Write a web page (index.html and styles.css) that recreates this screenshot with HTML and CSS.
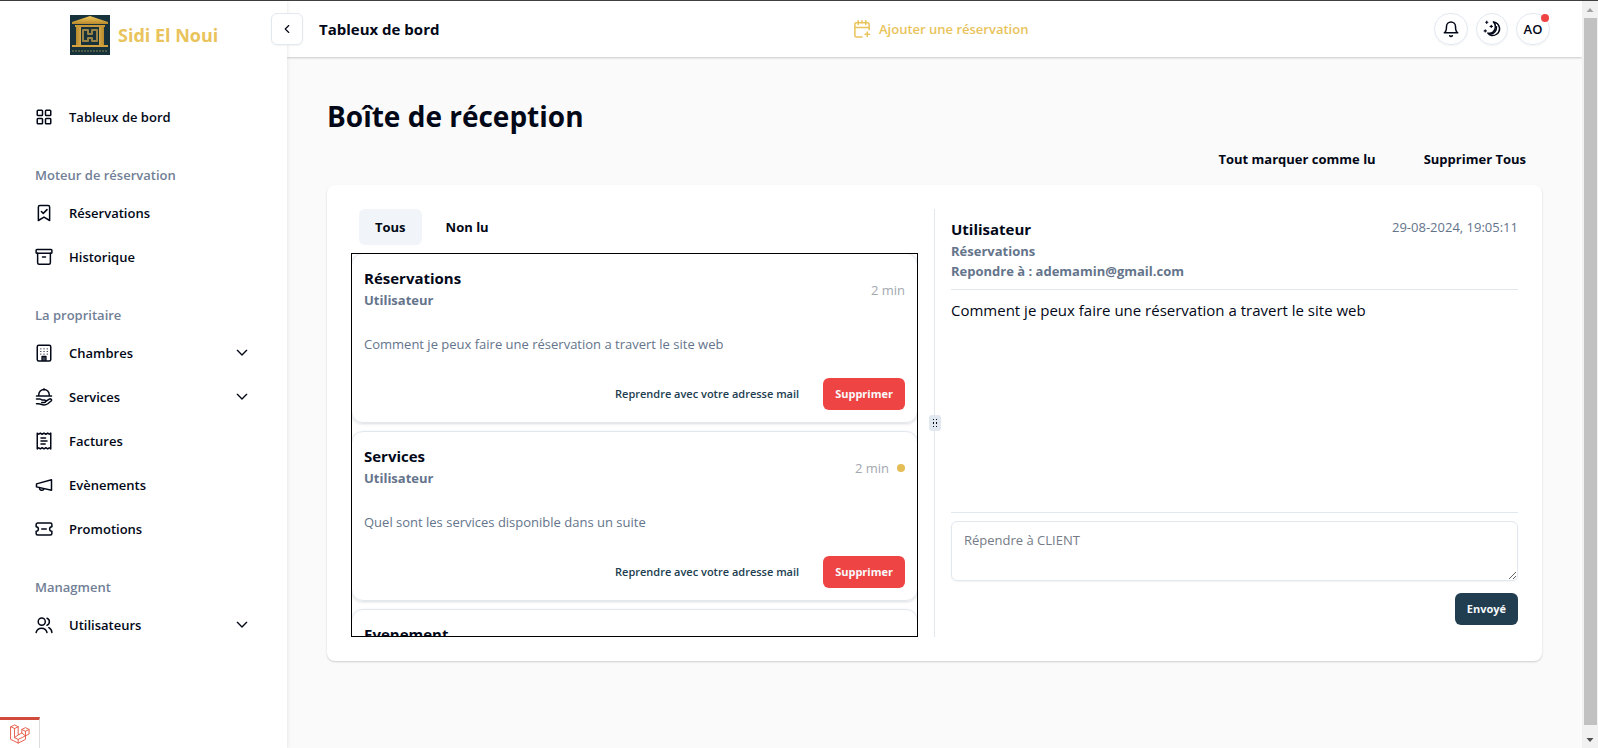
FILE: index.html
```html
<!DOCTYPE html>
<html lang="fr">
<head>
<meta charset="utf-8">
<title>Boîte de réception</title>
<link rel="stylesheet" href="styles.css">
</head>
<body>
<div class="app">
  <aside class="sidebar">
    <a class="brand" href="#">
      <svg class="brand-logo" viewBox="0 0 40 40" aria-hidden="true">
        <defs>
          <linearGradient id="gold" x1="0" y1="0" x2="0" y2="1"><stop offset="0" stop-color="#f3c95c"/><stop offset="1" stop-color="#b98a2c"/></linearGradient>
          <linearGradient id="pillar" x1="0" y1="0" x2="1" y2="0"><stop offset="0" stop-color="#b98a2c"/><stop offset=".5" stop-color="#ffdc78"/><stop offset="1" stop-color="#b98a2c"/></linearGradient>
        </defs>
        <rect width="40" height="40" fill="#17323b"/>
        <path d="M20 1 38 7v2H2V7z" fill="url(#gold)"/>
        <path d="M5 10h30v2H5z" fill="#c9983a"/>
        <path d="M6 12h5v18H6zM29 12h5v18h-5z" fill="url(#pillar)"/>
        <path d="M2 30h36v2H2z" fill="#d3a13e"/>
        <path d="M13 15h5v4h4v-4h5v11h-5v-3h-4v3h-5z" fill="none" stroke="#9a8347"/>
        <path d="M2 36h36" stroke="#4f5b45" stroke-dasharray="2 1"/>
      </svg>
      <span>Sidi El Noui</span>
    </a>
    <button class="collapse" type="button" aria-label="Réduire le menu">
      <svg class="i14" viewBox="0 0 24 24"><path d="m15 18-6-6 6-6"/></svg>
    </button>
    <nav class="nav">
      <section class="group">
        <a class="item" href="#"><svg viewBox="0 0 24 24"><rect x="3" y="3" width="7" height="7" rx="1"/><rect x="14" y="3" width="7" height="7" rx="1"/><rect x="14" y="14" width="7" height="7" rx="1"/><rect x="3" y="14" width="7" height="7" rx="1"/></svg><span>Tableux de bord</span></a>
      </section>
      <section class="group">
        <h2>Moteur de réservation</h2>
        <a class="item" href="#"><svg viewBox="0 0 24 24"><path d="M4.500 22V4a2 2 0 0 1 2-2h11a2 2 0 0 1 2 2v18L12 17.500z"/><path d="m8.500 10 2.500 2.500 5-5"/></svg><span>Réservations</span></a>
        <a class="item" href="#"><svg viewBox="0 0 24 24"><rect x="1.500" y="2" width="21" height="5" rx="1"/><path d="M3.500 7v12.500a2 2 0 0 0 2 2h13a2 2 0 0 0 2-2V7M10 12h4"/></svg><span>Historique</span></a>
      </section>
      <section class="group">
        <h2>La propritaire</h2>
        <a class="item" href="#"><svg viewBox="0 0 24 24"><rect x="3" y="1.500" width="18" height="21" rx="2"/><path d="M9.500 22v-5.500h5V22M12 17v5"/><path d="M7 6.500h1.500M11.300 6.500h1.500M15.600 6.500h1.500M7 10h1.500M11.300 10h1.500M15.600 10h1.500M7 13.500h1.500M11.300 13.500h1.500M15.600 13.500h1.500" stroke-width="1.200" stroke-linecap="butt"/></svg><span>Chambres</span><svg class="chev" viewBox="0 0 24 24"><path d="m5 8 7 7 7-7"/></svg></a>
        <a class="item" href="#"><svg viewBox="0 0 24 24"><path d="M12 2.500V1M5 9a7 7 0 0 1 14 0M2 10.500h20M2 21h3M2 14.500h4.500c1 0 2 .5 2.500 1.500h3.500a1.700 1.700 0 0 1 0 3.400H9M14 18l5-3.200c2-1 4 1 2.500 2.500L17 21c-1.500 1-3 1.500-5 1.500-3 0-5-1.500-7-1.500"/></svg><span>Services</span><svg class="chev" viewBox="0 0 24 24"><path d="m5 8 7 7 7-7"/></svg></a>
        <a class="item" href="#"><svg viewBox="0 0 24 24"><path d="M3 1.500 5 3l2-1.500L9.500 3 12 1.500 14.500 3 17 1.500 19 3l2-1.500v21L19 21l-2 1.500-2.500-1.500-2.500 1.500L9.500 21 7 22.500 5 21l-2 1.500z"/><path d="M8 8h6M8 12h8M8 16h5.500"/></svg><span>Factures</span></a>
        <a class="item" href="#"><svg viewBox="0 0 24 24"><path d="M2 10.500 22 5v14L2 14.500z"/><path d="M12 17a3 3 0 0 1-5.800-1.500"/></svg><span>Evènements</span></a>
        <a class="item" href="#"><svg viewBox="0 0 24 24"><path d="M1.500 9V6a2 2 0 0 1 2-2h17a2 2 0 0 1 2 2v3a3 3 0 0 0 0 6v3a2 2 0 0 1-2 2h-17a2 2 0 0 1-2-2v-3a3 3 0 0 0 0-6zM9 12h6"/></svg><span>Promotions</span></a>
      </section>
      <section class="group">
        <h2>Managment</h2>
        <a class="item" href="#"><svg viewBox="0 0 24 24"><path d="M16 22a7.500 7.500 0 0 0-14.500 0"/><circle cx="9" cy="7.500" r="4.700"/><path d="M16 3a5 5 0 0 1 0 9.300M18.500 15.500a8 8 0 0 1 4 6.500"/></svg><span>Utilisateurs</span><svg class="chev" viewBox="0 0 24 24"><path d="m5 8 7 7 7-7"/></svg></a>
      </section>
    </nav>
    <button class="debug" type="button" aria-label="Barre de débogage">
      <svg viewBox="0 0 22 22"><path d="m1 3 4-2 4 2v9l4-2V6l4-2 4 2v5l-4 2v4l-8 4-8-4zM1 3l4 2 4-2M5 5v10l4 2 8-4M9 12l-4 3M13 6l4 2 4-2M17 8v5M13 10l4 3M9 17v4"/></svg>
    </button>
  </aside>

  <div class="page">
    <header class="topbar">
      <strong class="crumb">Tableux de bord</strong>
      <a class="add" href="#">
        <svg viewBox="0 0 24 24"><path d="M21.500 13V5.500a2 2 0 0 0-2-2h-15a2 2 0 0 0-2 2v15a2 2 0 0 0 2 2H12M2.500 10h19M7 1v5M12 1v3M17 1v5M19 16v6M16 19h6"/></svg>
        <span>Ajouter une réservation</span>
      </a>
      <div class="tools">
        <button class="round wide" type="button" aria-label="Notifications"><svg viewBox="0 0 24 24"><path d="M6 8.500a6 6 0 0 1 12 0c0 6.500 3 8.500 3 8.500H3s3-2 3-8.500M10.300 21a2 2 0 0 0 3.400 0"/></svg></button>
        <button class="round" type="button" aria-label="Thème sombre"><svg viewBox="0 0 24 24"><path d="M14 2.500c9 2 10.500 12 4 16.500-4 3-9.500 2-11.500-1.500 5 1 10-2 10-8.500 0-3-1-5-2.500-6.500z"/><path d="M18 9c0 5-3 9-8 10"/><path d="M5 1.500v3M3.500 3h3M11 7v3M9.500 8.500h3M3 13v3M1.500 14.500h3" stroke-width="1.500"/></svg></button>
        <button class="round wide" type="button">AO<i class="badge"></i></button>
      </div>
    </header>

    <main class="content">
      <h1>Boîte de réception</h1>
      <div class="actions">
        <button type="button">Tout marquer comme lu</button>
        <button type="button">Supprimer Tous</button>
      </div>
      <div class="inbox">
        <section class="pane">
          <div class="tabs">
            <button class="tab active" type="button">Tous</button>
            <button class="tab" type="button">Non lu</button>
          </div>
          <div class="list">
            <article class="mail">
              <div class="mail-head"><div><h3>Réservations</h3><p class="from">Utilisateur</p></div><span class="time">2 min</span></div>
              <p class="excerpt">Comment je peux faire une réservation a travert le site web</p>
              <div class="mail-foot"><a class="reply" href="#">Reprendre avec votre adresse mail</a><button class="btn danger" type="button">Supprimer</button></div>
            </article>
            <article class="mail">
              <div class="mail-head"><div><h3>Services</h3><p class="from">Utilisateur</p></div><span class="time">2 min<i class="dot"></i></span></div>
              <p class="excerpt">Quel sont les services disponible dans un suite</p>
              <div class="mail-foot"><a class="reply" href="#">Reprendre avec votre adresse mail</a><button class="btn danger" type="button">Supprimer</button></div>
            </article>
            <article class="mail">
              <div class="mail-head"><div><h3>Evenement</h3></div></div>
            </article>
          </div>
        </section>
        <div class="divider"><span class="grip"><svg viewBox="0 0 12 16"><path d="M4 4h1v1H4zM7 4h1v1H7zM4 7h1v2H4zM7 7h1v2H7zM4 11h1v1H4zM7 11h1v1H7z"/></svg></span></div>
        <section class="pane">
          <div class="detail-head">
            <div><h3>Utilisateur</h3><p class="from">Réservations</p><p class="from">Repondre à : ademamin@gmail.com</p></div>
            <time>29-08-2024, 19:05:11</time>
          </div>
          <p class="message">Comment je peux faire une réservation a travert le site web</p>
          <form class="answer">
            <textarea aria-label="Réponse" placeholder="Répendre à CLIENT"></textarea>
            <button class="btn primary" type="button">Envoyé</button>
          </form>
        </section>
      </div>
    </main>
  </div>

  <div class="scrollbar" aria-hidden="true">
    <svg viewBox="0 0 16 17"><path d="M4.500 11 8 7l3.500 4z" fill="#a3a3a3"/></svg>
    <div class="thumb"></div>
    <svg viewBox="0 0 16 17"><path d="M4.500 7 8 11l3.500-4z" fill="#505050"/></svg>
  </div>
</div>
</body>
</html>
```
FILE: styles.css
```css
* { box-sizing: border-box; }
html { font-family: "Segoe UI", "Open Sans", "Noto Sans", sans-serif; font-size: 13px; line-height: 20px; color: #020817; }
body { margin: 0; }
h1, h2, h3, p { margin: 0; }
button, textarea { font: inherit; color: inherit; }
button { background: none; border: 0; padding: 0; cursor: pointer; }
a { color: inherit; text-decoration: none; }
svg { flex: none; fill: none; stroke: currentColor; stroke-width: 2; stroke-linecap: round; stroke-linejoin: round; }

.app { display: flex; min-height: 100vh; border-top: 1px solid #3f3f42; background: #fafafa; }

.sidebar { position: relative; z-index: 1; flex: none; width: 287px; display: flex; flex-direction: column; background: #fff; box-shadow: 0 0 4px rgba(0, 0, 0, .12); }
.brand { display: flex; align-items: center; gap: 8px; padding: 14px 0 0 70px; color: #e9c35b; font-size: 18px; font-weight: 700; line-height: 28px; }
.brand-logo { width: 40px; height: 40px; stroke-linecap: butt; stroke: none; }
.collapse { position: absolute; right: -16px; top: 12px; width: 32px; height: 32px; display: grid; place-items: center; background: #fff; border: 1px solid #e2e8f0; border-radius: 6px; box-shadow: 0 1px 2px rgba(0, 0, 0, .05); }
.i14 { width: 14px; height: 14px; }
.nav { display: flex; flex-direction: column; gap: 28px; padding: 42px 35px 0; }
.group { display: flex; flex-direction: column; gap: 4px; }
.group h2 { margin-bottom: 4px; font-size: 13px; font-weight: 600; color: #718096; }
.item { display: flex; align-items: center; gap: 16px; height: 40px; font-weight: 600; }
.item svg { width: 18px; height: 18px; }
.item .chev { width: 16px; height: 16px; margin-left: auto; margin-right: 2px; }
.debug { width: 40px; height: 31px; margin-top: auto; display: grid; place-items: center; border-top: 3px solid #d04b3c; border-right: 1px solid #ddd; color: #e5533f; }
.debug svg { width: 20px; height: 20px; stroke-width: 1; }

.page { flex: 1; min-width: 0; }
.topbar { display: flex; align-items: center; justify-content: space-between; height: 56px; padding: 0 32px; background: #fff; box-shadow: 0 1px 2px rgba(0, 0, 0, .2); clip-path: inset(0 0 -4px 0); }
.crumb { font-size: 15px; font-weight: 700; }
.add { display: flex; align-items: center; gap: 8px; margin-left: 8px; color: #e9c35b; font-weight: 600; }
.add svg { width: 18px; height: 18px; }
.tools { display: flex; gap: 8px; }
.round { position: relative; width: 32px; height: 32px; display: grid; place-items: center; border: 1px solid #e2e8f0; border-radius: 16px; font-weight: 600; box-shadow: 0 1px 2px rgba(0, 0, 0, .05); }
.wide { width: 34px; }
.round svg { width: 18px; height: 18px; }
.badge { position: absolute; top: 0; right: 0; width: 8px; height: 8px; border-radius: 50%; background: #ef4444; }

.content { padding: 40px; }
h1 { font-size: 28px; font-weight: 700; line-height: 38px; }
.actions { display: flex; justify-content: flex-end; gap: 16px; margin: 6px 0 8px; }
.actions button { height: 36px; padding: 0 16px; font-weight: 700; }
.inbox { display: flex; padding: 24px; background: #fff; border-radius: 8px; box-shadow: 0 1px 2px rgba(0, 0, 0, .18); }
.pane { flex: 1 1 0; min-width: 0; display: flex; flex-direction: column; }
.divider { position: relative; flex: none; width: 1px; margin: 0 16px; background: #e2e8f0; }
.grip { position: absolute; top: 50%; left: 50%; width: 12px; height: 16px; transform: translate(-50%, -50%); background: #e2e8f0; border-radius: 3px; }
.grip svg { display: block; width: 12px; height: 16px; fill: #020817; stroke: none; }

.tabs { display: flex; gap: 8px; padding: 0 8px; margin-bottom: 8px; }
.tab { height: 36px; padding: 0 16px; border-radius: 6px; font-weight: 700; }
.active { background: #f1f5f9; }
.list { display: flex; flex-direction: column; gap: 8px; height: 384px; overflow: hidden; outline: 1px solid #000; outline-offset: -1px; }
.mail { flex: none; padding: 12px; border: 1px solid #e2e8f0; border-radius: 12px; box-shadow: 0 1px 3px rgba(0, 0, 0, .14); }
.mail-head { display: flex; justify-content: space-between; height: 48px; }
h3 { font-size: 15px; font-weight: 700; line-height: 24px; }
.from { color: #64748b; font-weight: 700; }
.time { display: flex; align-items: center; gap: 8px; color: #a3a8b0; }
.dot { width: 8px; height: 8px; border-radius: 50%; background: #e3bd55; }
.excerpt { margin: 20px 0 24px; color: #64748b; }
.mail-foot { display: flex; justify-content: flex-end; align-items: center; gap: 24px; }
.reply { color: #213d50; font-size: 11px; font-weight: 600; }
.btn { height: 32px; padding: 0 12px; border-radius: 6px; font-size: 11px; font-weight: 700; color: #f8fafc; }
.danger { background: #ef4444; }
.primary { background: #213d50; }

.detail-head { display: flex; justify-content: space-between; padding: 8px 0; border-bottom: 1px solid #e2e8f0; }
.detail-head time { color: #64748b; }
.message { flex: 1; padding: 8px 0; font-size: 15px; line-height: 24px; }
.answer { display: flex; flex-direction: column; align-items: flex-end; gap: 12px; padding: 8px 0 12px; border-top: 1px solid #e2e8f0; }
.answer textarea { display: block; width: 100%; height: 60px; padding: 8px 12px; border: 1px solid #e2e8f0; border-radius: 6px; background: #fff; box-shadow: 0 1px 2px rgba(0, 0, 0, .05); resize: vertical; }
.answer textarea::placeholder { color: #757b86; opacity: 1; }

.scrollbar { flex: none; width: 16px; display: flex; flex-direction: column; align-items: stretch; background: #f1f1f1; }
.scrollbar svg { width: 16px; height: 17px; stroke: none; }
.thumb { flex: 1; margin: 0 1px 6px 2px; background: #c1c1c1; }
```
